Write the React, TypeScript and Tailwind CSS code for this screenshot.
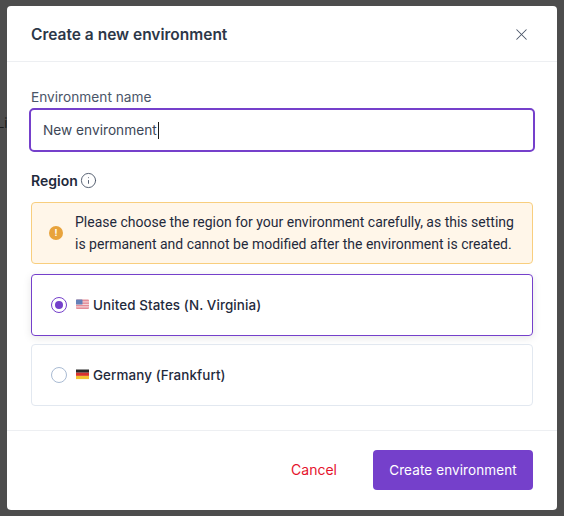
import { X, Info } from "lucide-react";

function UsFlag() {
  return (
    <svg width="13" height="11" viewBox="0 0 13 11" className="shrink-0">
      <rect x="0" y="0.5" width="13" height="9.5" rx="1" fill="#e58d98" />
      <rect x="0" y="2.4" width="13" height="1" fill="#f5dfe3" />
      <rect x="0" y="4.9" width="13" height="1" fill="#f5dfe3" />
      <rect x="0" y="7.4" width="13" height="1" fill="#f5dfe3" />
      <rect x="0" y="0.5" width="6.5" height="5" rx="0.6" fill="#6480b8" />
    </svg>
  );
}

function DeFlag() {
  return (
    <svg width="13" height="11" viewBox="0 0 13 11" className="shrink-0">
      <rect x="0" y="0.5" width="13" height="3.2" fill="#2a2a2a" />
      <rect x="0" y="3.7" width="13" height="3.2" fill="#d9322e" />
      <rect x="0" y="6.9" width="13" height="3.2" fill="#f2c230" />
    </svg>
  );
}

function RegionOption({
  label,
  flag,
  selected = false,
}: {
  label: string;
  flag: React.ReactNode;
  selected?: boolean;
}) {
  return (
    <div
      className={
        selected
          ? "flex h-[62px] items-center rounded border border-[#7540cb] pl-[19px] shadow-[0_2px_8px_rgba(0,0,0,0.1)]"
          : "flex h-[62px] items-center rounded border border-[#e2e8f0] pl-[19px]"
      }
    >
      {selected ? (
        <span className="flex size-4 items-center justify-center rounded-full border border-[#7540cb]">
          <span className="size-2 rounded-full bg-[#7540cb]" />
        </span>
      ) : (
        <span className="size-4 rounded-full border border-[#a9bbd3]" />
      )}
      <span className="ml-[9px] flex items-center gap-[4px]">
        {flag}
        <span className="pt-px text-[13.4px] font-medium tracking-[0.1px] text-[#1f2a3c]">{label}</span>
      </span>
    </div>
  );
}

export default function App() {
  return (
    <div className="relative flex h-[516px] w-[564px] justify-center overflow-hidden bg-[#4d4d4d] pt-[6px] font-['Inter',sans-serif]">
      {/* Page behind the overlay */}
      <span className="absolute left-[-3px] top-[114px] text-[13px] text-[#1c1c1c]">Li</span>

      <div className="relative flex h-[504px] w-[550px] flex-col rounded bg-white">
        {/* Header */}
        <div className="flex h-[56px] shrink-0 items-center justify-between border-b border-[#edeff2] pl-[24px] pr-[26px] pt-[2px]">
          <h2 className="text-[15.5px] font-semibold text-[#2d3748]">Create a new environment</h2>
          <X className="size-[19px] text-[#4a5568]" strokeWidth={1.3} />
        </div>

        {/* Body */}
        <div className="flex flex-1 flex-col px-[24px] pt-[27px]">
          <label className="text-[13.7px] leading-4 text-[#4a5568]">Environment name</label>
          <div className="mx-[-2px] mt-[3px] flex h-[44px] items-center rounded-[5px] border-2 border-[#7540cb] pl-[12px]">
            <span className="pt-px text-[13.7px] text-[#3d4757]">New environment</span>
            <span className="ml-px h-[17px] w-px bg-[#1a1a1a]" />
          </div>

          <div className="mt-[20px] flex items-center gap-[2px]">
            <span className="text-[14px] font-semibold leading-4 text-[#1f2a3c]">Region</span>
            <Info className="size-[17px] text-[#4a5568]" strokeWidth={1.3} />
          </div>

          <div className="mt-[13px] flex h-[62px] items-center rounded border border-[#f8ce7e] bg-[#fff6e9] pl-[17px]">
            <span className="flex size-[14px] shrink-0 items-center justify-center rounded-full bg-[#e8a33c] text-[9px] font-bold text-white">
              !
            </span>
            <p className="ml-[12px] font-['Roboto',sans-serif] text-[14px] leading-[22px] text-[#1f2a3c]">
              Please choose the region for your environment carefully, as this setting
              <br />
              is permanent and cannot be modified after the environment is created.
            </p>
          </div>

          <div className="mt-[10px] flex flex-col gap-[8px]">
            <RegionOption label="United States (N. Virginia)" flag={<UsFlag />} selected />
            <RegionOption label="Germany (Frankfurt)" flag={<DeFlag />} />
          </div>
        </div>

        {/* Footer */}
        <div className="flex h-[80px] shrink-0 items-center justify-end border-t border-[#edeff2] pb-[2px] pr-[24px]">
          <button className="mr-[36px] text-[14px] text-[#e5132d]">Cancel</button>
          <button className="h-[40px] w-[160px] rounded bg-[#7540cb] pt-px text-[13.5px] tracking-[0.1px] text-white">
            Create environment
          </button>
        </div>
      </div>
    </div>
  );
}
